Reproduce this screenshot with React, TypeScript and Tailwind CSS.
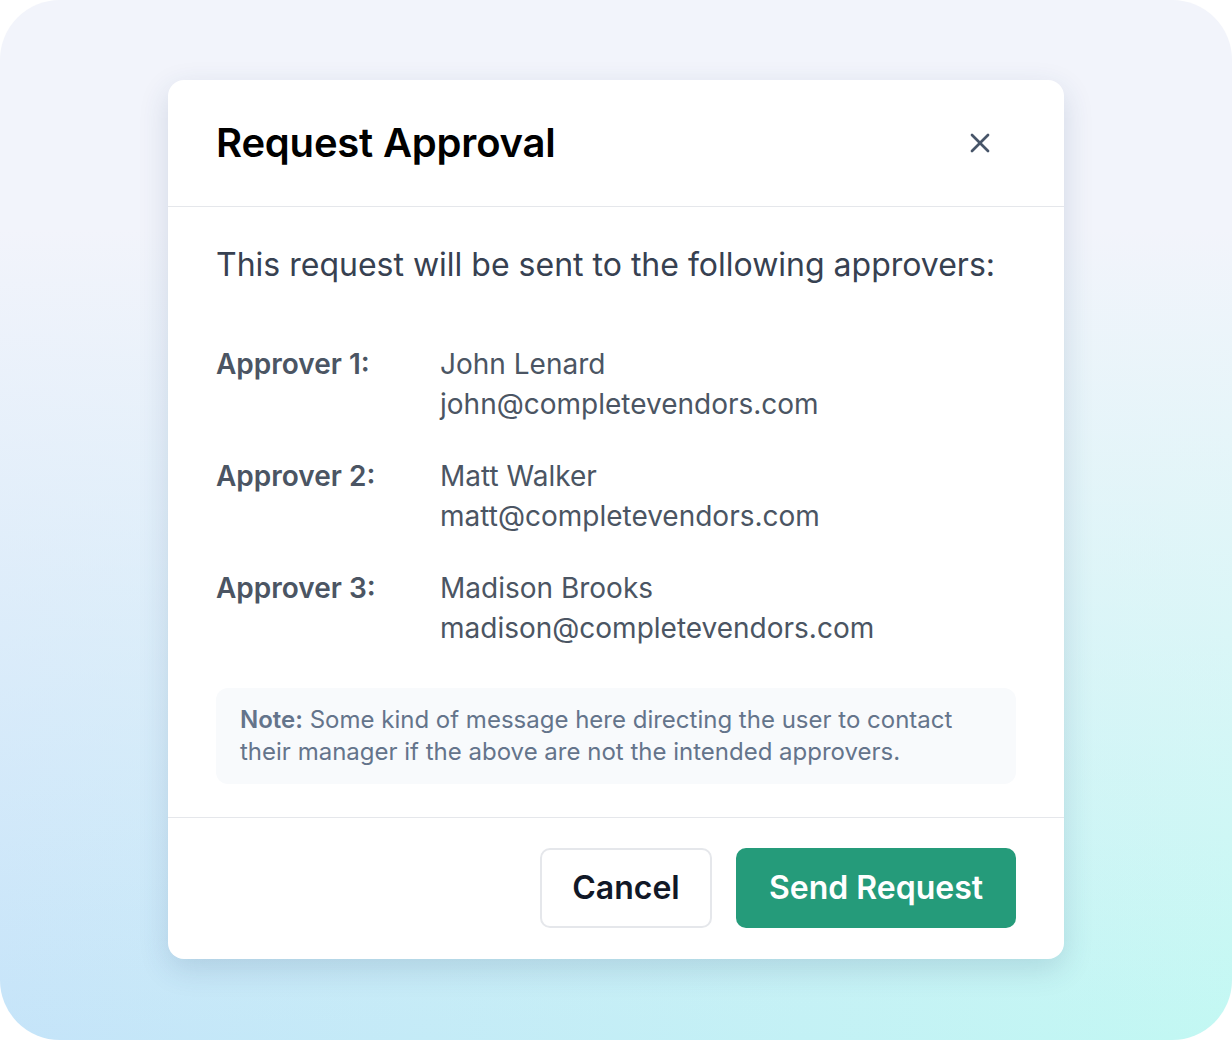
import { X } from "lucide-react";

const approvers = [
  { label: "Approver 1:", name: "John Lenard", email: "john@completevendors.com" },
  { label: "Approver 2:", name: "Matt Walker", email: "matt@completevendors.com" },
  { label: "Approver 3:", name: "Madison Brooks", email: "madison@completevendors.com" },
];

export default function App() {
  return (
    <div className="h-[1040px] w-[1232px] bg-white font-['Inter',sans-serif]">
      <div className="flex h-full w-full items-start justify-center rounded-[60px] bg-[linear-gradient(180deg,#f2f4fb_22%,rgba(242,244,251,0)_100%),linear-gradient(90deg,#c5e4f9,#c2f8f3)] pt-[80px]">
        <div className="w-[896px] overflow-hidden rounded-2xl bg-white shadow-[0_10px_30px_rgba(40,70,110,0.16)]">
          {/* Header */}
          <div className="flex h-[127px] items-center justify-between border-b border-[#e5e7eb] pl-12 pr-[68px]">
            <h1 className="text-[40px] leading-10 font-semibold tracking-[-0.2px] text-black">Request Approval</h1>
            <button className="text-[#475569]">
              <X size={32} strokeWidth={2} />
            </button>
          </div>

          {/* Body */}
          <div className="border-b border-[#e5e7eb] px-12 pt-[38px] pb-[33px]">
            <p className="text-[32px] leading-10 text-[#374151]">This request will be sent to the following approvers:</p>

            <div className="mt-[59px] flex flex-col gap-8">
              {approvers.map((a) => (
                <div key={a.label} className="flex text-[28px] leading-10">
                  <div className="w-[224px] font-semibold text-[#4b5563]">{a.label}</div>
                  <div className="text-[#4b5563]">
                    <div>{a.name}</div>
                    <div>{a.email}</div>
                  </div>
                </div>
              ))}
            </div>

            <p className="mt-10 rounded-xl bg-[#f8fafc] px-6 py-4 text-[24px] leading-8 text-[#64748b]">
              <b className="font-semibold">Note:</b> Some kind of message here directing the user to contact their manager if the above are not the intended approvers.
            </p>
          </div>

          {/* Footer */}
          <div className="flex justify-end gap-6 px-12 pt-[30px] pb-[31px]">
            <button className="h-20 w-[172px] rounded-[10px] border-2 border-[#e5e7eb] bg-white text-[32px] font-semibold text-[#111827]">
              Cancel
            </button>
            <button className="h-20 w-[280px] rounded-[10px] bg-[#259b7a] text-[32px] font-semibold text-white">
              Send Request
            </button>
          </div>
        </div>
      </div>
    </div>
  );
}
